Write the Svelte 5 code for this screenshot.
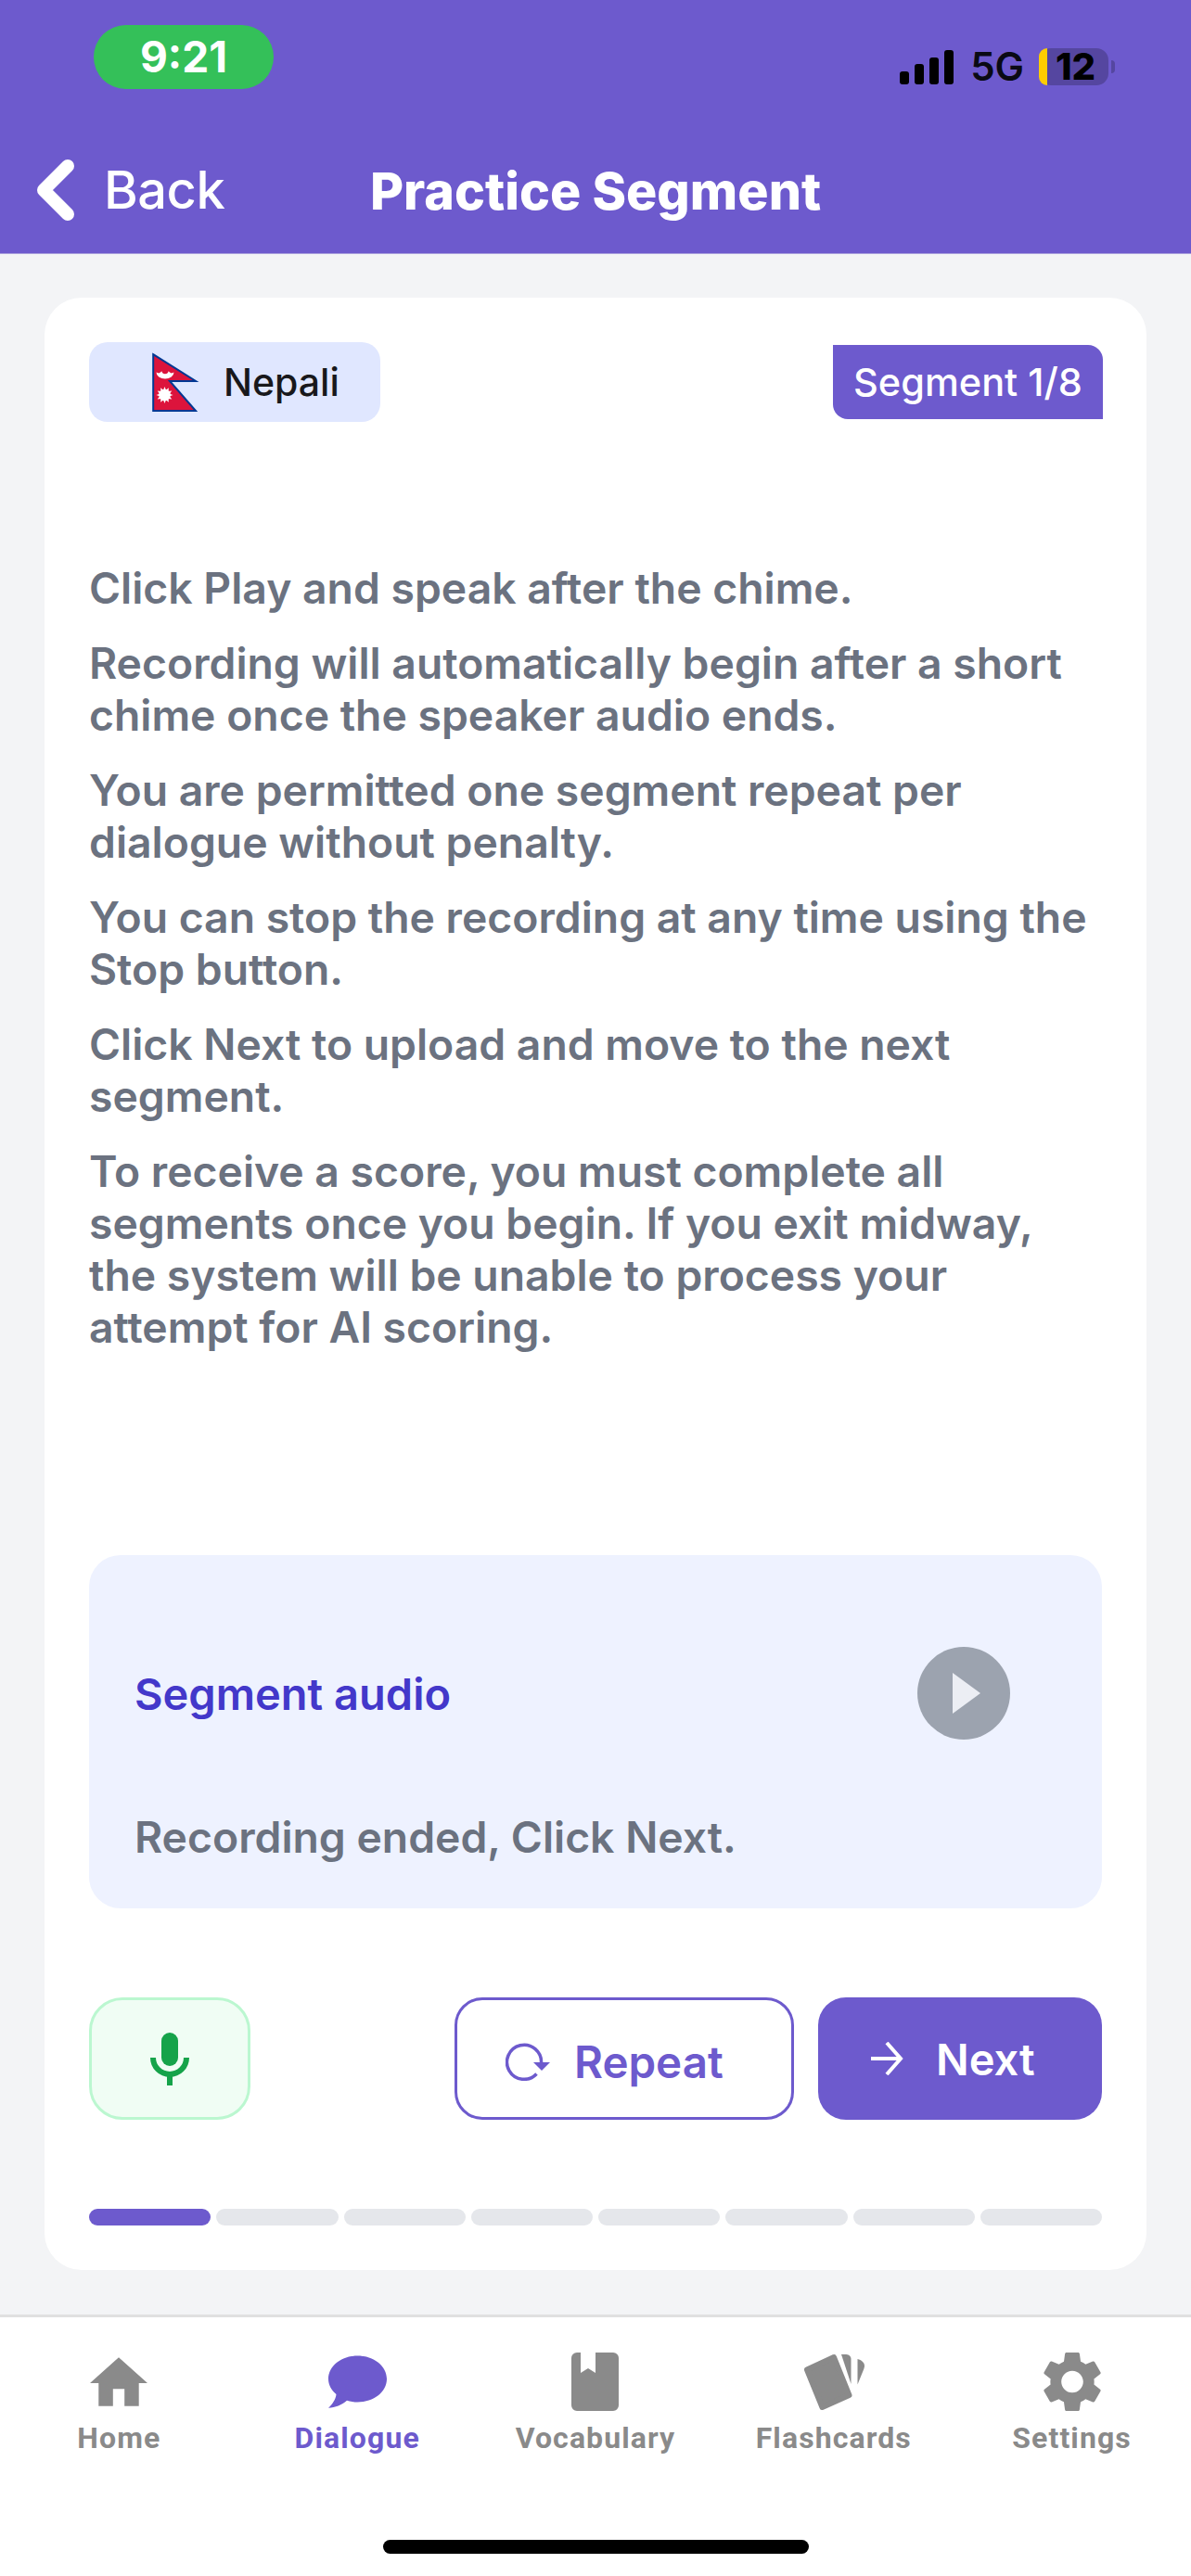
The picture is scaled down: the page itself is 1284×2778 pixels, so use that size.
<script>
	const paragraphs = [
		'Click Play and speak after the chime.',
		'Recording will automatically begin after a short chime once the speaker audio ends.',
		'You are permitted one segment repeat per dialogue without penalty.',
		'You can stop the recording at any time using the Stop button.',
		'Click Next to upload and move to the next segment.',
		'To receive a score, you must complete all segments once you begin. If you exit midway, the system will be unable to process your attempt for AI scoring.'
	];
	const segments = [0, 1, 2, 3, 4, 5, 6, 7];
	const sunRays = Array.from({ length: 12 }, (_, i) => i * 30);
</script>

<div class="page">
	<header class="topbar">
		<div class="status">
			<span class="time">9:21</span>
			<div class="indicators">
				<div class="signal">
					<i style="height:14px"></i>
					<i style="height:22px"></i>
					<i style="height:29px"></i>
					<i style="height:37px"></i>
				</div>
				<span class="network">5G</span>
				<div class="battery">
					<span class="level"></span>
					<span class="charge">12</span>
				</div>
				<span class="nub"></span>
			</div>
		</div>
		<nav class="titlebar">
			<div class="back">
				<svg width="40" height="66" viewBox="0 0 40 66">
					<path d="M33 7 7 33l26 26" fill="none" stroke="#fff" stroke-width="14" stroke-linecap="round" stroke-linejoin="round" />
				</svg>
				<span>Back</span>
			</div>
			<h1>Practice Segment</h1>
		</nav>
	</header>

	<main>
		<section class="card">
			<div class="meta">
				<div class="chip">
					<svg class="flag" width="51" height="64" viewBox="0 0 51 64">
						<path d="M1.2 2.2 47 31H19l28 32H1.2z" fill="#dc143c" stroke="#003893" stroke-width="2" />
						<path d="M4.500 21.500a9.500 7 0 0 0 19 0l-2.600 1a7 4 0 0 1-3.200-2.200 3.800 3.800 0 0 1-7.400 0 7 4 0 0 1-3.200 2.200z" fill="#fff" />
						<circle cx="13.500" cy="46" r="6.200" fill="#fff" />
						{#each sunRays as r}
							<path d="M13.500 37l1.600 4h-3.200z" fill="#fff" transform="rotate({r} 13.500 46)" />
						{/each}
					</svg>
					<span>Nepali</span>
				</div>
				<div class="badge">Segment 1/8</div>
			</div>

			<div class="instructions">
				{#each paragraphs as p}
					<p>{p}</p>
				{/each}
			</div>

			<div class="panel">
				<div class="panel-row">
					<span class="panel-title">Segment audio</span>
					<button class="play" aria-label="Play">
						<svg width="30" height="44" viewBox="0 0 30 44"><path d="M0 0 30 22 0 44z" fill="#eceef4" /></svg>
					</button>
				</div>
				<div class="panel-status">Recording ended, Click Next.</div>
			</div>

			<div class="controls">
				<button class="mic" aria-label="Microphone">
					<svg width="42" height="57" viewBox="0 0 42 57">
						<rect x="12" y="0" width="18" height="36" rx="9" fill="#16a34a" />
						<path d="M3 27a18 18 0 0 0 36 0" fill="none" stroke="#16a34a" stroke-width="6" />
						<rect x="18" y="46" width="6" height="11" fill="#16a34a" />
					</svg>
				</button>
				<button class="repeat">
					<svg width="48" height="41" viewBox="0 0 48 41">
						<path d="M33.500 33.500A18.500 18.500 0 1 1 38.500 22" fill="none" stroke="#6d5acd" stroke-width="3.500" />
						<path d="M30 21h18l-9 9z" fill="#6d5acd" />
					</svg>
					<span>Repeat</span>
				</button>
				<button class="next">
					<svg width="35" height="36" viewBox="0 0 35 36">
						<path d="M0 18h32M17 1l15 17-15 17" fill="none" stroke="#fff" stroke-width="4" />
					</svg>
					<span>Next</span>
				</button>
			</div>

			<div class="progress">
				{#each segments as s}
					<span class="step" class:done={s === 0}></span>
				{/each}
			</div>
		</section>
	</main>

	<footer class="tabs">
		<div class="tab-row">
			<div class="tab">
				<div class="tab-icon">
					<svg width="62" height="53" viewBox="2 3 20 17"><path d="M10 20v-6h4v6h5v-8h3L12 3 2 12h3v8z" fill="#8a8a8a" /></svg>
				</div>
				<span>Home</span>
			</div>
			<div class="tab active">
				<div class="tab-icon">
					<svg width="63" height="57" viewBox="0 0 63 57">
						<path d="M31.500 0.500C49 0.500 63 11.700 63 25.500S49 50.500 31.500 50.500C27.500 50.500 23.700 49.900 20 48.700 14.500 53.500 7.500 56.300 0 56.800 4.500 52.500 8 47.500 8.500 42 3.200 37.500 0 31.800 0 25.500 0 11.700 14 0.500 31.500 0.500Z" fill="#6d5acd" />
					</svg>
				</div>
				<span>Dialogue</span>
			</div>
			<div class="tab">
				<div class="tab-icon">
					<svg width="51" height="63" viewBox="0 0 51 63">
						<path d="M10 0v22l8-5 8 5V0h19a6 6 0 0 1 6 6v51a6 6 0 0 1-6 6H6a6 6 0 0 1-6-6V6a6 6 0 0 1 6-6z" fill="#8a8a8a" />
					</svg>
				</div>
				<span>Vocabulary</span>
			</div>
			<div class="tab">
				<div class="tab-icon">
					<svg width="66" height="62" viewBox="0 0 66 62">
						<path d="M33 4 4 17.500 20.500 58 49.500 45z" fill="#8a8a8a" stroke="#8a8a8a" stroke-width="6" stroke-linejoin="round" />
						<path d="M41 1h5c3 0 5.500 2 5.500 5v27z" fill="#8a8a8a" />
						<path d="M58.500 6c4 1 7.500 3.500 7.500 7.500 0 1-.5 2.500-1 4l-6.500 16z" fill="#8a8a8a" />
					</svg>
				</div>
				<span>Flashcards</span>
			</div>
			<div class="tab">
				<div class="tab-icon">
					<svg width="62" height="63" viewBox="2.700 2.400 18.600 19.200">
						<path fill="#8a8a8a" d="M19.140 12.940c.04-.3.06-.61.06-.94 0-.32-.02-.64-.07-.94l2.030-1.580c.18-.14.23-.41.12-.61l-1.920-3.320c-.12-.22-.37-.29-.59-.22l-2.390.96c-.5-.38-1.030-.7-1.620-.94L14.400 2.810c-.04-.24-.24-.41-.48-.41h-3.840c-.24 0-.43.17-.47.41L9.250 5.350c-.59.24-1.130.57-1.620.94L5.240 5.330c-.22-.08-.47 0-.59.22L2.740 8.870c-.12.21-.08.47.12.61l2.030 1.580c-.05.3-.09.63-.09.94s.02.64.07.94l-2.030 1.580c-.18.14-.23.41-.12.61l1.920 3.320c.12.22.37.29.59.22l2.390-.96c.5.38 1.030.7 1.620.94l.36 2.540c.05.24.24.41.48.41h3.840c.24 0 .44-.17.47-.41l.36-2.540c.59-.24 1.130-.56 1.620-.94l2.390.96c.22.08.47 0 .59-.22l1.920-3.320c.12-.22.07-.47-.12-.61l-2.010-1.580zM12 15.600c-1.980 0-3.600-1.620-3.600-3.600s1.620-3.600 3.600-3.600 3.600 1.620 3.600 3.600-1.620 3.600-3.600 3.600z" />
					</svg>
				</div>
				<span>Settings</span>
			</div>
		</div>
		<div class="home-bar"></div>
	</footer>
</div>

<style>
	:global(body) {
		background: #fff;
	}
	.page {
		width: 1284px;
		height: 2778px;
		display: flex;
		flex-direction: column;
		font-family: Inter, 'Liberation Sans', sans-serif;
		overflow: hidden;
	}
	button {
		font-family: inherit;
		padding: 0;
		margin: 0;
		border: none;
		display: flex;
		align-items: center;
	}

	/* header */
	.topbar {
		height: 274px;
		background: #6d5acd;
		border-bottom: 1px solid #a9a0dc;
		box-sizing: border-box;
		flex: none;
	}
	.status {
		display: flex;
		align-items: flex-start;
		padding: 27px 82px 0 101px;
	}
	.time {
		width: 194px;
		height: 69px;
		border-radius: 35px;
		background: #34c059;
		color: #fff;
		font-size: 46px;
		font-weight: 700;
		line-height: 69px;
		text-align: center;
	}
	.indicators {
		margin-left: auto;
		margin-top: 25px;
		display: flex;
		align-items: flex-end;
		height: 40px;
	}
	.signal {
		display: flex;
		align-items: flex-end;
		gap: 6px;
		margin-right: 18px;
		margin-bottom: 1px;
	}
	.signal i {
		width: 10px;
		border-radius: 3px;
		background: #000;
	}
	.network {
		font-size: 42px;
		font-weight: 600;
		line-height: 40px;
		color: #0a0a14;
		margin-right: 16px;
	}
	.battery {
		width: 75px;
		height: 40px;
		border-radius: 13px;
		background: rgba(0, 0, 0, 0.22);
		position: relative;
		text-align: center;
	}
	.level {
		position: absolute;
		left: 0;
		top: 0;
		bottom: 0;
		width: 9px;
		border-radius: 13px 0 0 13px;
		background: #ffcc00;
	}
	.charge {
		position: relative;
		font-size: 40px;
		font-weight: 800;
		line-height: 40px;
		color: #000;
		padding-left: 4px;
	}
	.nub {
		width: 4px;
		height: 14px;
		margin: 0 0 13px 3px;
		border-radius: 0 6px 6px 0;
		background: rgba(0, 0, 0, 0.22);
	}
	.titlebar {
		display: grid;
		grid-template-columns: 1fr auto 1fr;
		align-items: center;
		margin-top: 74px;
		height: 70px;
		padding-left: 40px;
		padding-right: 40px;
	}
	.back {
		display: flex;
		align-items: center;
		gap: 32px;
		color: #fff;
		font-size: 56px;
		font-weight: 500;
		letter-spacing: -0.5px;
	}
	h1 {
		margin: 0;
		color: #fff;
		font-size: 55.5px;
		font-weight: 800;
	}

	/* card */
	main {
		flex: 1;
		background: #f3f4f6;
		padding: 47px 48px 48px;
		min-height: 0;
	}
	.card {
		height: 100%;
		box-sizing: border-box;
		background: #fff;
		border-radius: 40px;
		padding: 48px;
		display: flex;
		flex-direction: column;
	}
	.meta {
		display: flex;
		align-items: center;
		justify-content: space-between;
	}
	.chip {
		width: 314px;
		height: 86px;
		box-sizing: border-box;
		padding-left: 68px;
		border-radius: 20px;
		background: #e0e7ff;
		display: flex;
		align-items: center;
		gap: 26px;
		color: #18181b;
		font-size: 41px;
		font-weight: 500;
	}
	.flag {
		margin-top: -1px;
	}
	.badge {
		height: 80px;
		width: 291px;
		margin-right: -1px;
		border-radius: 0 16px 0 16px;
		background: #6d5acd;
		color: #fff;
		font-size: 41.5px;
		font-weight: 500;
		line-height: 80px;
		text-align: center;
	}
	.instructions {
		margin-top: 151px;
	}
	.instructions p {
		margin: 0 0 25px;
		color: #6b7280;
		font-size: 46.3px;
		font-weight: 600;
		line-height: 56px;
	}
	.panel {
		margin-top: auto;
		height: 381px;
		box-sizing: border-box;
		padding: 99px 99px 48px 49px;
		border-radius: 34px;
		background: #eef2ff;
	}
	.panel-row {
		display: flex;
		align-items: center;
		justify-content: space-between;
	}
	.panel-title {
		color: #4338ca;
		font-size: 47px;
		font-weight: 600;
	}
	.play {
		width: 100px;
		height: 100px;
		border-radius: 50%;
		background: #9ca3af;
		justify-content: center;
		padding-left: 6px;
	}
	.panel-status {
		margin-top: 77px;
		color: #6b7280;
		font-size: 46.3px;
		font-weight: 600;
		line-height: 56px;
	}
	.controls {
		margin-top: 96px;
		display: flex;
		gap: 26px;
		height: 132px;
	}
	.mic {
		width: 174px;
		height: 132px;
		box-sizing: border-box;
		margin-right: auto;
		border: 3px solid #bbf7d0;
		border-radius: 36px;
		background: #f0fdf4;
		justify-content: center;
	}
	.repeat {
		width: 366px;
		box-sizing: border-box;
		padding: 7px 0 0 52px;
		gap: 26px;
		border: 3px solid #6d5acd;
		border-radius: 30px;
		background: #fff;
		color: #6d5acd;
		font-size: 47.5px;
		font-weight: 600;
	}
	.next {
		width: 306px;
		box-sizing: border-box;
		padding-left: 57px;
		gap: 35px;
		border-radius: 30px;
		background: #6d5acd;
		color: #fff;
		font-size: 47px;
		font-weight: 600;
	}
	.progress {
		margin-top: 96px;
		display: flex;
		gap: 6px;
	}
	.step {
		flex: 1;
		height: 18px;
		border-radius: 9px;
		background: #e5e7eb;
	}
	.step.done {
		background: #6d5acd;
	}

	/* tab bar */
	.tabs {
		height: 282px;
		flex: none;
		box-sizing: border-box;
		border-top: 3px solid #e0e0e0;
		background: #fff;
		display: flex;
		flex-direction: column;
	}
	.tab-row {
		display: grid;
		grid-template-columns: repeat(5, 1fr);
		padding-top: 38px;
	}
	.tab {
		display: flex;
		flex-direction: column;
		align-items: center;
		color: #8a8a8a;
		font-family: Roboto, sans-serif;
		font-size: 32px;
		font-weight: 700;
		letter-spacing: 1.1px;
		line-height: 36px;
	}
	.tab.active {
		color: #6d5acd;
	}
	.tab-icon {
		height: 63px;
		display: flex;
		align-items: center;
		justify-content: center;
		margin-bottom: 11px;
	}
	.home-bar {
		width: 459px;
		height: 15px;
		border-radius: 8px;
		background: #000;
		align-self: center;
		margin-top: auto;
		margin-bottom: 24px;
	}
</style>
